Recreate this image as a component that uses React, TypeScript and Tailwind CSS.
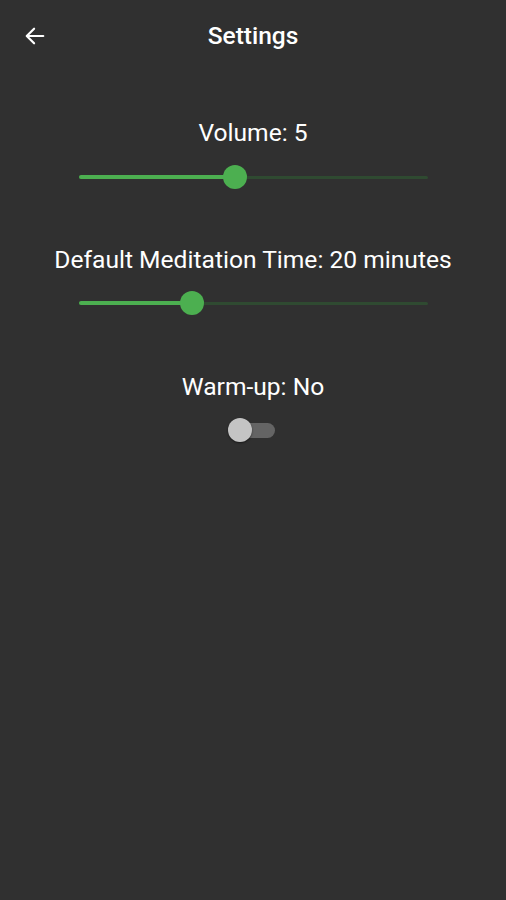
import React from "react";

function Slider({ thumb }: { thumb: number }) {
  return (
    <div className="relative w-[349px] h-[24px] mx-auto">
      <div className="absolute left-0 right-0 top-[10.5px] h-[3px] rounded-full bg-[#2f4a31]" />
      <div
        className="absolute left-0 top-[10px] h-[4px] rounded-full bg-[#4caf50]"
        style={{ width: thumb }}
      />
      <div
        className="absolute top-0 w-[24px] h-[24px] rounded-full bg-[#4caf50]"
        style={{ left: thumb - 12 }}
      />
    </div>
  );
}

export default function App() {
  return (
    <div
      className="w-[506px] h-[900px] bg-[#303030] text-white flex flex-col"
      style={{ fontFamily: "Roboto, 'Noto Sans', sans-serif" }}
    >
      <div className="relative h-[72px] flex items-center justify-center">
        <svg
          className="absolute left-[24px] top-[25px]"
          width="22"
          height="22"
          viewBox="0 0 24 24"
          fill="none"
          stroke="white"
          strokeWidth="2.4"
          strokeLinecap="round"
          strokeLinejoin="round"
        >
          <path d="M21 12H4" />
          <path d="M11 4l-8 8 8 8" />
        </svg>
        <div className="text-[24.5px] font-medium leading-none">Settings</div>
      </div>

      <div className="mt-[47px] text-center text-[24.6px] leading-[28px]">Volume: 5</div>
      <div className="mt-[18px]">
        <Slider thumb={156} />
      </div>

      <div className="mt-[57px] text-center text-[24.6px] leading-[28px]">
        Default Meditation Time: 20 minutes
      </div>
      <div className="mt-[17px]">
        <Slider thumb={113} />
      </div>

      <div className="mt-[58px] text-center text-[24.6px] leading-[28px]">Warm-up: No</div>
      <div className="mt-[17px] flex justify-center">
        <div className="relative w-[44px] h-[24px]">
          <div className="absolute left-[8px] right-0 top-[5px] h-[15px] rounded-full bg-[#646464]" />
          <div className="absolute left-[-3px] top-0 w-[24px] h-[24px] rounded-full bg-[#c4c4c4] shadow-[0_1px_2px_rgba(0,0,0,0.5)]" />
        </div>
      </div>
    </div>
  );
}
